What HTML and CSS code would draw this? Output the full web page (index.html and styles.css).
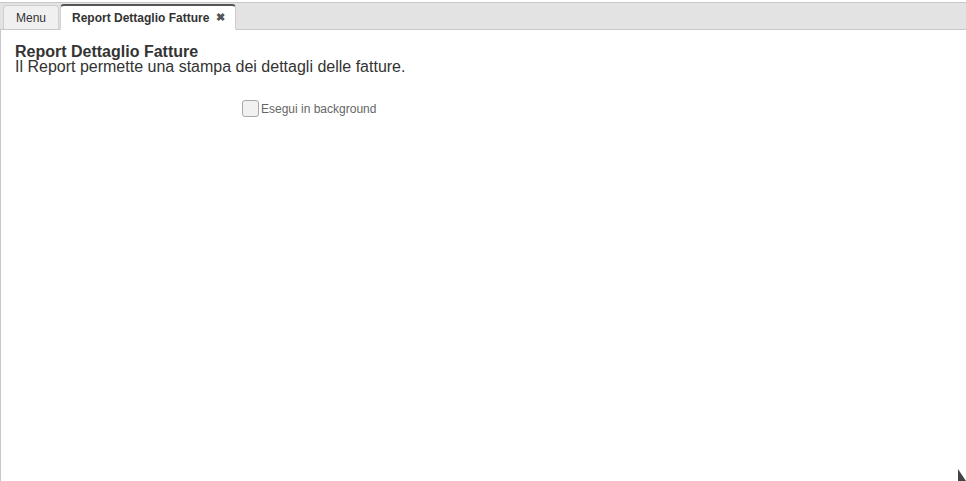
FILE: index.html
```html
<!DOCTYPE html>
<html>
<head>
<meta charset="utf-8">
<link rel="stylesheet" href="styles.css">
</head>
<body>
<div class="app">
  <div class="tabbar">
    <div class="tab">Menu</div>
    <div class="tab active">Report Dettaglio Fatture <span class="close">&#x2716;</span></div>
  </div>
  <div class="content">
    <div class="header">
      <div class="title">Report Dettaglio Fatture</div>
      <div class="desc">Il Report permette una stampa dei dettagli delle fatture.</div>
    </div>
    <div class="options">
      <label class="check"><span class="box"></span>Esegui in background</label>
    </div>
    <div class="grip"></div>
  </div>
</div>
</body>
</html>
```
FILE: styles.css
```css
* { box-sizing: border-box; }
html, body { margin: 0; padding: 0; height: 100%; background: #fff; }
body { font-family: "Liberation Sans", Arial, sans-serif; color: #333; }
.app { height: 481px; display: flex; flex-direction: column; padding-top: 2px; }
.tabbar {
  height: 28px;
  background: #e3e3e3;
  border-top: 1px solid #c8c8c8;
  border-bottom: 1px solid #c8c8c8;
  display: flex;
  align-items: flex-end;
  padding-left: 3px;
  gap: 1px;
}
.tab {
  height: 25px;
  margin-bottom: -1px;
  padding: 0 12px 0 12px;
  display: flex;
  align-items: center;
  font-size: 12px;
  color: #333;
  background: #f0f0f0;
  border: 1px solid #cfcfcf;
  border-bottom: 1px solid #c8c8c8;
  border-radius: 4px 4px 0 0;
}
.tab.active {
  height: 26px;
  background: #fff;
  border-color: #cfcfcf;
  border-top: 2px solid #555;
  border-bottom-color: #fff;
  font-weight: bold;
  padding: 0 10px 0 11px;
  border-radius: 4px 4px 0 0;
}
.close { font-size: 11px; color: #555; margin-left: 7px; font-weight: bold; }
.content {
  flex: 1;
  border-left: 1px solid #c8c8c8;
  position: relative;
  padding: 13px 14px;
}
.title { font-size: 16px; font-weight: bold; line-height: 17px; color: #333; }
.desc { font-size: 16px; line-height: 16px; color: #333; margin-top: -1px; }
.options { padding-left: 227px; margin-top: 25px; }
.check { display: inline-flex; align-items: center; font-size: 12px; color: #666; }
.box {
  width: 17px; height: 17px;
  border: 1px solid #a8a8a8;
  border-radius: 3px;
  background: #f1f1f1;
  margin-right: 2px;
}
.grip {
  position: absolute;
  right: 0; bottom: 0;
  width: 0; height: 0;
  border-left: 8px solid #444;
  border-top: 12px solid transparent;
}
```
